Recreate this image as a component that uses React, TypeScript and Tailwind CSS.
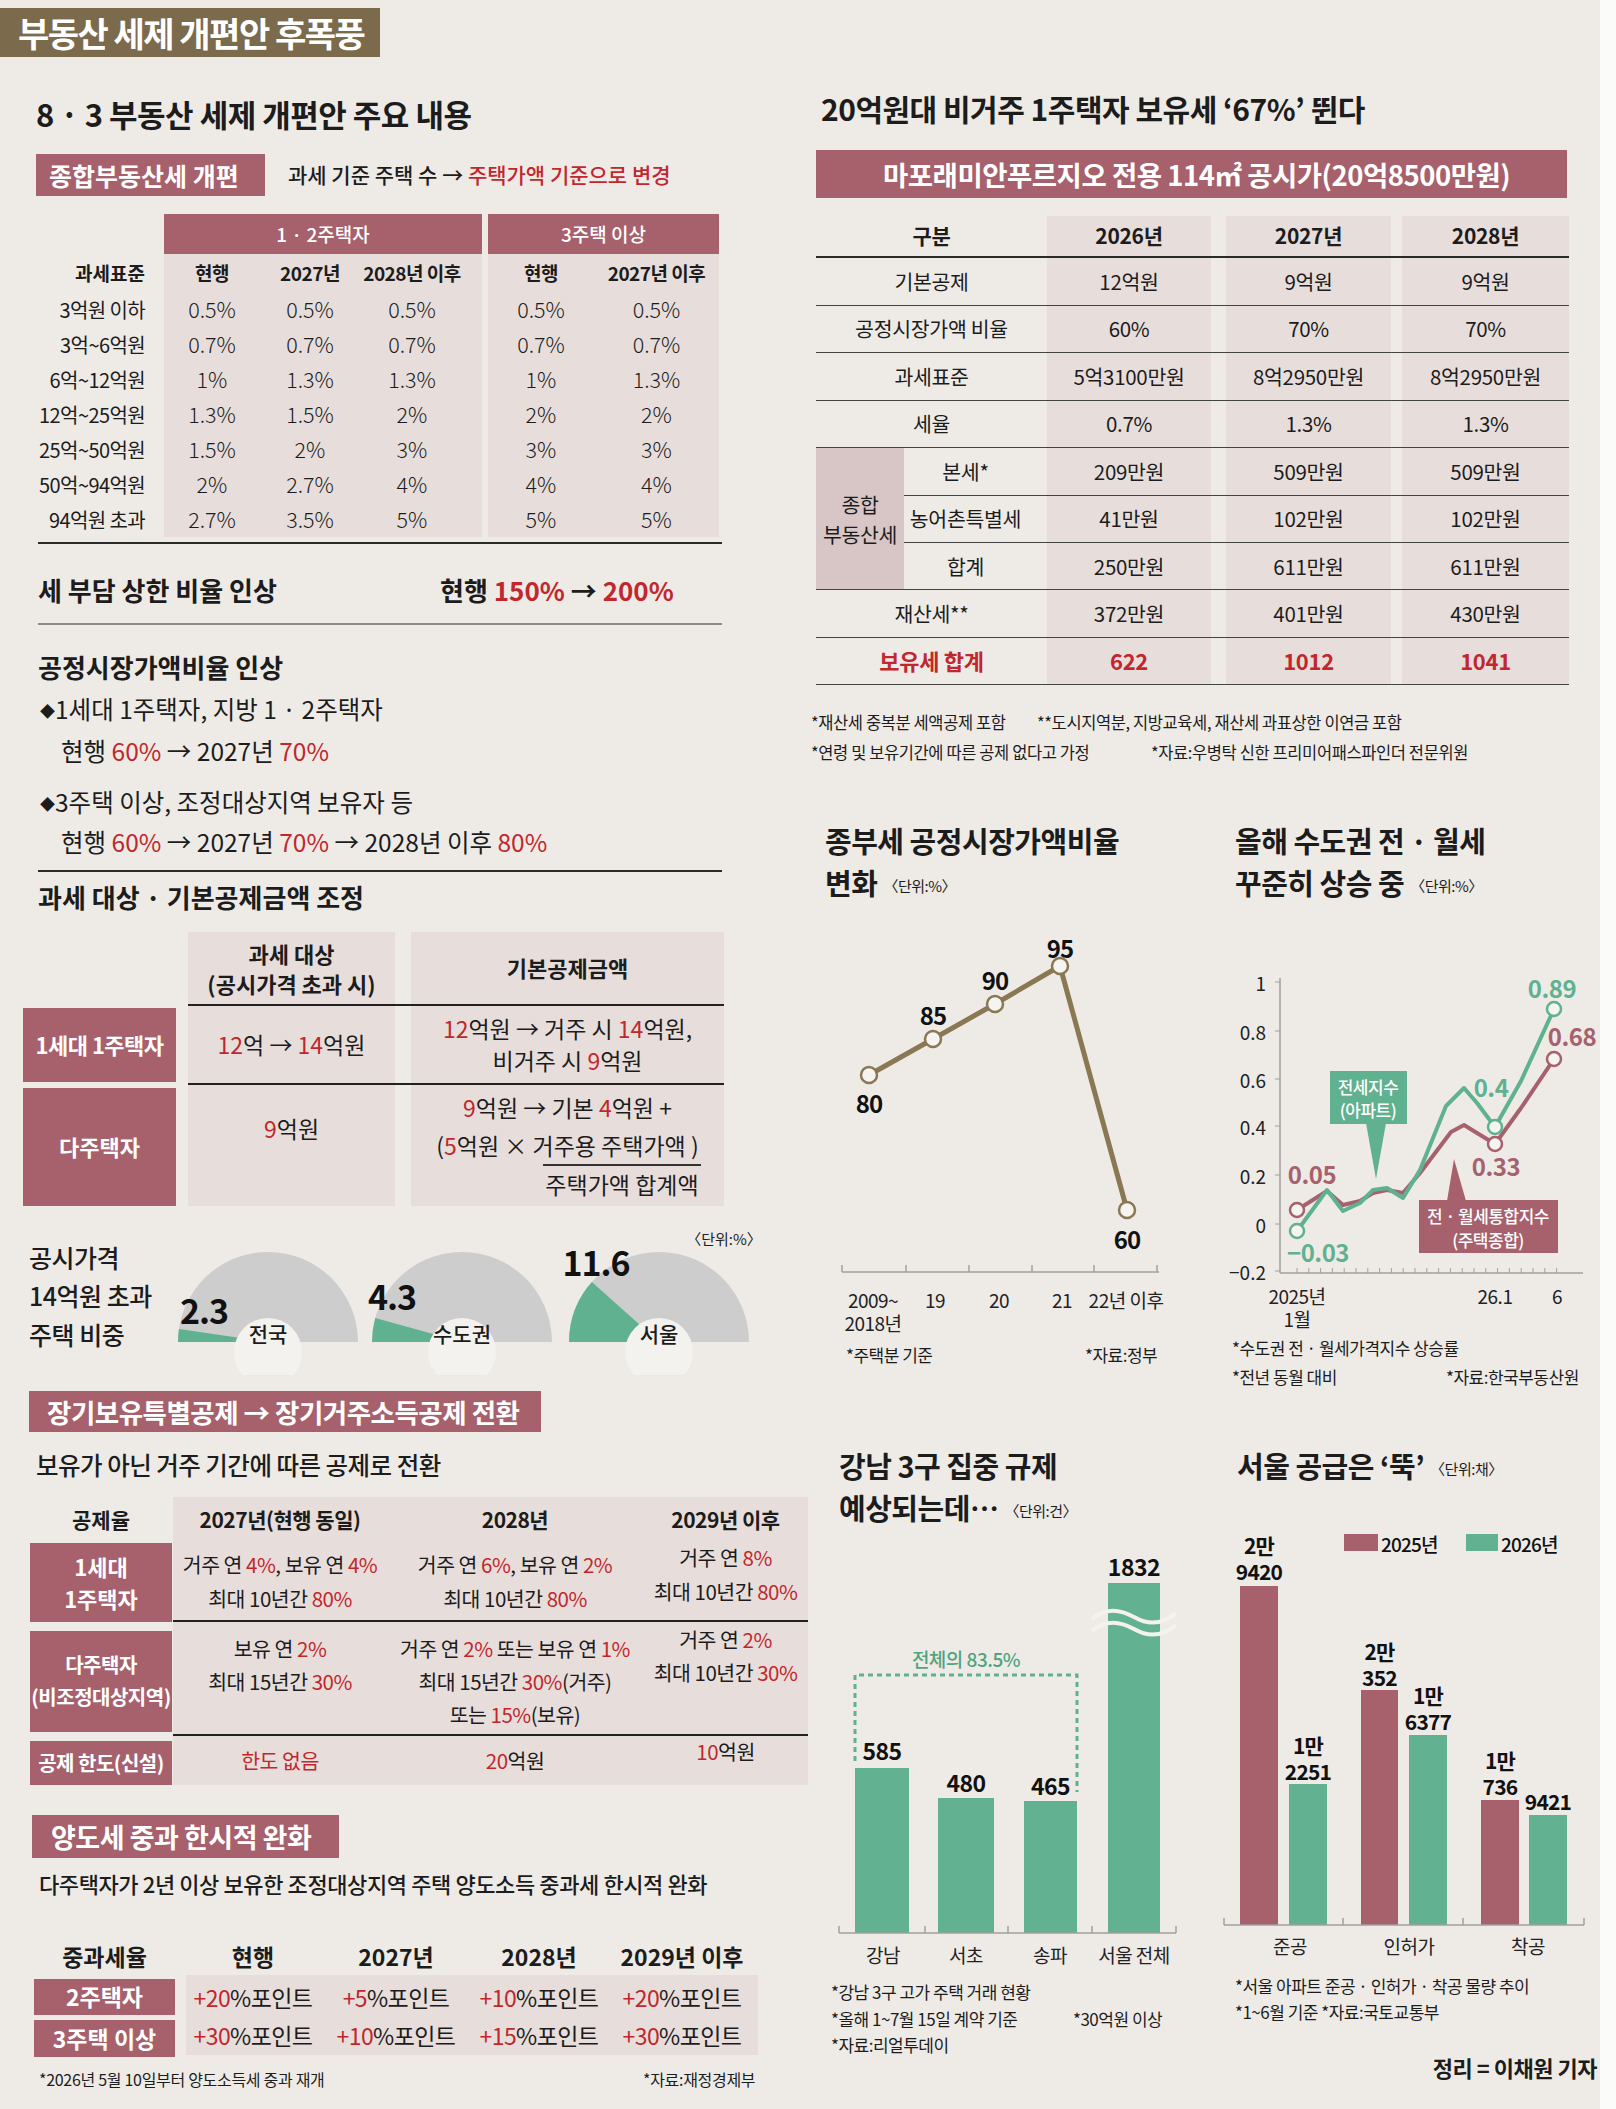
import React from 'react';

const R = ({ children }: { children: React.ReactNode }) => <span className="text-[#c1272d]">{children}</span>;

const taxRows = [
  { label: '3억원 이하', a: ['0.5%', '0.5%', '0.5%'], b: ['0.5%', '0.5%'] },
  { label: '3억~6억원', a: ['0.7%', '0.7%', '0.7%'], b: ['0.7%', '0.7%'] },
  { label: '6억~12억원', a: ['1%', '1.3%', '1.3%'], b: ['1%', '1.3%'] },
  { label: '12억~25억원', a: ['1.3%', '1.5%', '2%'], b: ['2%', '2%'] },
  { label: '25억~50억원', a: ['1.5%', '2%', '3%'], b: ['3%', '3%'] },
  { label: '50억~94억원', a: ['2%', '2.7%', '4%'], b: ['4%', '4%'] },
  { label: '94억원 초과', a: ['2.7%', '3.5%', '5%'], b: ['5%', '5%'] },
];

const G1 = ['w-[96px]', 'w-[100px]', 'w-[104px]'];
const G2 = ['w-[106px]', 'w-[125px]'];

const TaxRateTable = () => (
  <div className="mt-[18px] flex">
    <div className="flex w-[164px] flex-col pr-[19px] text-right">
      <div className="h-[40px]" />
      <div className="h-[38px] text-[19px] font-bold leading-[38px]">과세표준</div>
      {taxRows.map((r) => (
        <div key={r.label} className="h-[35px] text-[20px] leading-[35px] tracking-[-0.6px]">{r.label}</div>
      ))}
    </div>
    <div className="flex w-[318px] flex-col">
      <div className="flex h-[40px] items-center justify-center bg-[#a6616c] text-[19px] font-medium text-white">1 · 2주택자</div>
      <div className="flex flex-col bg-[#e7dedb]">
        <div className="flex h-[38px] items-center text-[19px] font-bold tracking-[-0.5px]">
          {['현행', '2027년', '2028년 이후'].map((h, i) => (
            <div key={h} className={`${G1[i]} text-center`}>{h}</div>
          ))}
        </div>
        {taxRows.map((r) => (
          <div key={r.label} className="flex h-[35px] items-center text-[21.5px] font-light">
            {r.a.map((v, i) => (
              <div key={i} className={`${G1[i]} text-center`}>{v}</div>
            ))}
          </div>
        ))}
      </div>
    </div>
    <div className="ml-[6px] flex w-[231px] flex-col">
      <div className="flex h-[40px] items-center justify-center bg-[#a6616c] text-[19px] font-medium text-white">3주택 이상</div>
      <div className="flex flex-col bg-[#e7dedb]">
        <div className="flex h-[38px] items-center text-[19px] font-bold tracking-[-0.5px]">
          {['현행', '2027년 이후'].map((h, i) => (
            <div key={h} className={`${G2[i]} text-center`}>{h}</div>
          ))}
        </div>
        {taxRows.map((r) => (
          <div key={r.label} className="flex h-[35px] items-center text-[21.5px] font-light">
            {r.b.map((v, i) => (
              <div key={i} className={`${G2[i]} text-center`}>{v}</div>
            ))}
          </div>
        ))}
      </div>
    </div>
  </div>
);

const DeductionTable = () => (
  <div className="mt-[15px] flex">
    <div className="ml-[23px] flex w-[153px] flex-col text-[22px] font-bold text-white">
      <div className="h-[76px]" />
      <div className="flex h-[74px] items-center justify-center bg-[#a6616c] tracking-[-0.5px]">1세대 1주택자</div>
      <div className="mt-[6px] flex h-[118px] items-center justify-center bg-[#a6616c]">다주택자</div>
    </div>
    <div className="ml-[12px] flex w-[536px] flex-col">
      <div className="flex h-[72px] gap-[16px] text-[22px] font-bold">
        <div className="flex w-[207px] flex-col items-center justify-center bg-[#e7dedb] leading-[30px]">
          <span>과세 대상</span>
          <span>(공시가격 초과 시)</span>
        </div>
        <div className="flex w-[313px] items-center justify-center bg-[#e7dedb]">기본공제금액</div>
      </div>
      <div className="h-[2px] bg-[#222]" />
      <div className="flex h-[77px] gap-[16px] text-[23px]">
        <div className="flex w-[207px] items-center justify-center bg-[#e7dedb]">
          <span><R>12</R>억 → <R>14</R>억원</span>
        </div>
        <div className="flex w-[313px] flex-col items-center justify-center bg-[#e7dedb] leading-[32px]">
          <span><R>12</R>억원 → 거주 시 <R>14</R>억원,</span>
          <span>비거주 시 <R>9</R>억원</span>
        </div>
      </div>
      <div className="h-[2px] bg-[#222]" />
      <div className="flex h-[121px] gap-[16px] text-[23px]">
        <div className="flex w-[207px] justify-center bg-[#e7dedb] pt-[27px] leading-[32px]">
          <span><R>9</R>억원</span>
        </div>
        <div className="flex w-[313px] flex-col bg-[#e7dedb] pt-[3px]">
          <div className="h-[38px] text-center leading-[38px]"><R>9</R>억원 → 기본 <R>4</R>억원 +</div>
          <div className="h-[38px] text-center leading-[38px]">(<R>5</R>억원 × 거주용 주택가액 )</div>
          <div className="ml-[132px] h-[2px] w-[158px] bg-[#333]" />
          <div className="ml-[132px] h-[36px] w-[158px] text-center leading-[36px]">주택가액 합계액</div>
        </div>
      </div>
    </div>
  </div>
);

const Donut = ({ cx, pct, label }: { cx: number; pct: number; label: string }) => {
  const cy = 1342;
  const r = 90;
  const a = (pct * 3.6 * Math.PI) / 180;
  const px = cx - r * Math.cos(a);
  const py = cy - r * Math.sin(a);
  return (
    <g>
      <path d={`M${cx - r},${cy} A${r},${r} 0 0 1 ${cx + r},${cy} Z`} fill="#cdcdcd" />
      <path d={`M${cx},${cy} L${cx - r},${cy} A${r},${r} 0 0 1 ${px},${py} Z`} fill="#5fb18f" />
      <circle cx={cx} cy={cy + 10} r={34} fill="#f4f2ef" />
      <text x={cx} y={1333} textAnchor="middle" dominantBaseline="central" fontSize={21} fontWeight={500} fill="#1c1c1c">
        {label}
      </text>
    </g>
  );
};

const ShareDonuts = () => (
  <div className="mt-[19px] flex h-[150px]">
    <div className="w-[170px] pl-[29px] pt-[13px] text-[25px] font-medium leading-[38.5px] tracking-[-0.5px]">
      <div>공시가격</div>
      <div>14억원 초과</div>
      <div>주택 비중</div>
    </div>
    <svg width={600} height={150} viewBox="170 1225 600 150">
      <Donut cx={268} pct={2.3} label="전국" />
      <Donut cx={462} pct={4.3} label="수도권" />
      <Donut cx={659} pct={11.6} label="서울" />
      <g fontSize={34} fontWeight={700} fill="#111" textAnchor="middle" dominantBaseline="central" letterSpacing={-1}>
        <text x={204} y={1309}>2.3</text>
        <text x={392} y={1295}>4.3</text>
        <text x={596} y={1261}>11.6</text>
      </g>
      <text x={724} y={1238} textAnchor="middle" dominantBaseline="central" fontSize={15} fill="#222">〈단위:%〉</text>
    </svg>
  </div>
);

const C3 = ['w-[214px]', 'w-[256px]', 'w-[165px]'];

const LongTermTable = () => (
  <div className="mt-[14px] flex">
    <div className="ml-[30px] flex w-[142px] flex-col font-bold">
      <div className="flex h-[46px] items-center justify-center text-[21px]">공제율</div>
      <div className="flex h-[79px] flex-col items-center justify-center bg-[#a6616c] text-[22px] leading-[32px] text-white">
        <span>1세대</span>
        <span>1주택자</span>
      </div>
      <div className="mt-[9px] flex h-[101px] flex-col items-center justify-center bg-[#a6616c] text-[20px] leading-[32px] tracking-[-0.5px] text-white">
        <span>다주택자</span>
        <span>(비조정대상지역)</span>
      </div>
      <div className="mt-[9px] flex h-[44px] items-center justify-center bg-[#a6616c] text-[20px] tracking-[-0.5px] text-white">공제 한도(신설)</div>
    </div>
    <div className="ml-[1px] flex w-[635px] flex-col bg-[#e7dedb] text-[20.5px] tracking-[-0.5px]">
      <div className="flex h-[46px] items-center text-[21px] font-bold">
        <div className={`${C3[0]} text-center`}>2027년(현행 동일)</div>
        <div className={`${C3[1]} text-center`}>2028년</div>
        <div className={`${C3[2]} text-center`}>2029년 이후</div>
      </div>
      <div className="flex h-[77px] leading-[34px]">
        <div className={`${C3[0]} flex flex-col items-center justify-center`}>
          <span>거주 연 <R>4%</R>, 보유 연 <R>4%</R></span>
          <span>최대 10년간 <R>80%</R></span>
        </div>
        <div className={`${C3[1]} flex flex-col items-center justify-center`}>
          <span>거주 연 <R>6%</R>, 보유 연 <R>2%</R></span>
          <span>최대 10년간 <R>80%</R></span>
        </div>
        <div className={`${C3[2]} flex flex-col items-center justify-center pb-[14px]`}>
          <span>거주 연 <R>8%</R></span>
          <span>최대 10년간 <R>80%</R></span>
        </div>
      </div>
      <div className="h-[2px] bg-[#222]" />
      <div className="flex h-[112px] leading-[33px]">
        <div className={`${C3[0]} flex flex-col items-center pt-[10px]`}>
          <span>보유 연 <R>2%</R></span>
          <span>최대 15년간 <R>30%</R></span>
        </div>
        <div className={`${C3[1]} flex flex-col items-center pt-[10px]`}>
          <span>거주 연 <R>2%</R> 또는 보유 연 <R>1%</R></span>
          <span>최대 15년간 <R>30%</R>(거주)</span>
          <span>또는 <R>15%</R>(보유)</span>
        </div>
        <div className={`${C3[2]} flex flex-col items-center pt-[1px]`}>
          <span>거주 연 <R>2%</R></span>
          <span>최대 10년간 <R>30%</R></span>
        </div>
      </div>
      <div className="h-[2px] bg-[#222]" />
      <div className="flex h-[49px] items-center">
        <div className={`${C3[0]} text-center`}><R>한도 없음</R></div>
        <div className={`${C3[1]} text-center`}><R>20</R>억원</div>
        <div className={`${C3[2]} pb-[18px] text-center`}><R>10</R>억원</div>
      </div>
    </div>
  </div>
);

const C4 = ['w-[134px]', 'w-[152px]', 'w-[134px]', 'w-[152px]'];

const SurchargeTable = () => (
  <>
    <div className="mt-[39px] flex h-[36px] items-center text-[23px] font-bold">
      <div className="ml-[34px] w-[141px] text-center">중과세율</div>
      <div className="ml-[11px] flex">
        {['현행', '2027년', '2028년', '2029년 이후'].map((h, i) => (
          <div key={h} className={`${C4[i]} text-center`}>{h}</div>
        ))}
      </div>
    </div>
    <div className="flex">
      <div className="ml-[34px] flex w-[141px] flex-col text-[23px] font-bold text-white">
        <div className="mt-[4px] flex h-[36px] items-center justify-center bg-[#a6616c]">2주택자</div>
        <div className="mt-[5px] flex h-[37px] items-center justify-center bg-[#a6616c]">3주택 이상</div>
      </div>
      <div className="ml-[11px] flex h-[80px] w-[572px] flex-col bg-[#e7dedb] pt-[3px] text-[23px] tracking-[-0.6px]">
        {[
          ['+20', '+5', '+10', '+20'],
          ['+30', '+10', '+15', '+30'],
        ].map((row, ri) => (
          <div key={ri} className="flex h-[38.5px] items-center">
            {row.map((v, i) => (
              <div key={i} className={`${C4[i]} whitespace-nowrap text-center`}>
                <R>{v}</R>%포인트
              </div>
            ))}
          </div>
        ))}
      </div>
    </div>
    <div className="mt-[8px] flex h-[28px] items-center text-[16px] tracking-[-0.3px]">
      <span className="w-[643px] pl-[39px]">*2026년 5월 10일부터 양도소득세 중과 재개</span>
      <span>*자료:재정경제부</span>
    </div>
  </>
);

const LeftColumn = () => (
  <div className="flex w-[811px] shrink-0 flex-col">
    <div className="mt-[8px] h-[49px] w-[380px] whitespace-nowrap bg-[#7b6a4b] pl-[18px] text-[34px] font-bold leading-[49px] tracking-[-1.5px] text-white">부동산 세제 개편안 후폭풍</div>
    <h1 className="mt-[37px] h-[40px] pl-[36px] text-[31px] font-bold leading-[40px] tracking-[-0.5px]">8 · 3 부동산 세제 개편안 주요 내용</h1>
    <div className="mt-[20px] flex h-[42px] items-center">
      <div className="ml-[36px] h-[42px] w-[229px] bg-[#a6616c] pl-[13px] text-[25px] font-bold leading-[42px] text-white">종합부동산세 개편</div>
      <div className="ml-[23px] text-[21px] font-medium">
        과세 기준 주택 수 → <R>주택가액 기준으로 변경</R>
      </div>
    </div>
    <TaxRateTable />
    <div className="ml-[38px] mt-[5px] h-[2px] w-[684px] bg-[#2a2a2a]" />
    <div className="mt-[25px] flex h-[40px] items-center pl-[38px] text-[26px] font-bold">
      <span className="w-[402px]">세 부담 상한 비율 인상</span>
      <span>
        현행 <R>150%</R> → <R>200%</R>
      </span>
    </div>
    <div className="ml-[38px] mt-[14px] h-[1.5px] w-[684px] bg-[#8a8a8a]" />
    <div className="mt-[22px] h-[40px] pl-[38px] text-[26px] font-bold leading-[40px]">공정시장가액비율 인상</div>
    <div className="mt-[1px] h-[42px] pl-[40px] text-[24.5px] leading-[42px]">
      <span className="align-[2px] text-[15px]">◆</span>1세대 1주택자, 지방 1 · 2주택자
    </div>
    <div className="h-[42px] pl-[61px] text-[24.5px] leading-[42px]">
      현행 <R>60%</R> → 2027년 <R>70%</R>
    </div>
    <div className="mt-[9px] h-[42px] pl-[40px] text-[24.5px] leading-[42px]">
      <span className="align-[2px] text-[15px]">◆</span>3주택 이상, 조정대상지역 보유자 등
    </div>
    <div className="h-[38px] pl-[61px] text-[24.5px] leading-[38px]">
      현행 <R>60%</R> → 2027년 <R>70%</R> → 2028년 이후 <R>80%</R>
    </div>
    <div className="ml-[38px] mt-[9px] h-[2px] w-[684px] bg-[#2a2a2a]" />
    <div className="mt-[5px] h-[40px] pl-[38px] text-[26px] font-bold leading-[40px]">과세 대상 · 기본공제금액 조정</div>
    <DeductionTable />
    <ShareDonuts />
    <div className="ml-[29px] mt-[16px] h-[41px] w-[512px] whitespace-nowrap bg-[#a6616c] pl-[18px] text-[26.5px] font-bold leading-[41px] tracking-[-0.5px] text-white">
      장기보유특별공제 → 장기거주소득공제 전환
    </div>
    <div className="mt-[15px] h-[36px] pl-[36px] text-[24.5px] font-medium leading-[36px] tracking-[-0.5px]">보유가 아닌 거주 기간에 따른 공제로 전환</div>
    <LongTermTable />
    <div className="ml-[32px] mt-[30px] h-[43px] w-[307px] whitespace-nowrap bg-[#a6616c] pl-[19px] text-[27px] font-bold leading-[43px] tracking-[-0.5px] text-white">
      양도세 중과 한시적 완화
    </div>
    <div className="mt-[8px] h-[34px] whitespace-nowrap pl-[39px] text-[22px] font-medium leading-[34px] tracking-[-0.4px]">
      다주택자가 2년 이상 보유한 조정대상지역 주택 양도소득 중과세 한시적 완화
    </div>
    <SurchargeTable />
  </div>
);

const VAL_W = ['w-[164px]', 'w-[165px]', 'w-[167px]'];

const Vals = ({ vals }: { vals: string[] }) => (
  <>
    <div className={`${VAL_W[0]} flex items-center justify-center bg-[#e7dedb]`}>{vals[0]}</div>
    <div className="w-[15px]" />
    <div className={`${VAL_W[1]} flex items-center justify-center bg-[#e7dedb]`}>{vals[1]}</div>
    <div className="w-[11px]" />
    <div className={`${VAL_W[2]} flex items-center justify-center bg-[#e7dedb]`}>{vals[2]}</div>
  </>
);

const HoldingTaxTable = () => (
  <div className="ml-[5px] mt-[18px] flex w-[753px] flex-col text-[20.5px] tracking-[-0.3px]">
    <div className="flex h-[42px] border-b-2 border-[#2a2a2a] text-[21px] font-bold">
      <div className="flex w-[231px] items-center justify-center">구분</div>
      <Vals vals={['2026년', '2027년', '2028년']} />
    </div>
    {[
      ['기본공제', '12억원', '9억원', '9억원'],
      ['공정시장가액 비율', '60%', '70%', '70%'],
      ['과세표준', '5억3100만원', '8억2950만원', '8억2950만원'],
      ['세율', '0.7%', '1.3%', '1.3%'],
    ].map((r) => (
      <div key={r[0]} className="flex h-[47.5px] border-b-[1.5px] border-[#444]">
        <div className="flex w-[231px] items-center justify-center">{r[0]}</div>
        <Vals vals={r.slice(1)} />
      </div>
    ))}
    <div className="flex border-b-[1.5px] border-[#444]">
      <div className="flex w-[88px] flex-col items-center justify-center bg-[#d8c6c6] leading-[30px]">
        <span>종합</span>
        <span>부동산세</span>
      </div>
      <div className="flex w-[665px] flex-col">
        {[
          ['본세*', '209만원', '509만원', '509만원'],
          ['농어촌특별세', '41만원', '102만원', '102만원'],
          ['합계', '250만원', '611만원', '611만원'],
        ].map((r, i) => (
          <div key={r[0]} className={`flex ${i < 2 ? 'h-[47.5px] border-b-[1.5px] border-[#444]' : 'h-[46px]'}`}>
            <div className="flex w-[143px] items-center justify-center pr-[20px]">{r[0]}</div>
            <Vals vals={r.slice(1)} />
          </div>
        ))}
      </div>
    </div>
    <div className="flex h-[47.5px] border-b-[1.5px] border-[#444]">
      <div className="flex w-[231px] items-center justify-center">재산세**</div>
      <Vals vals={['372만원', '401만원', '430만원']} />
    </div>
    <div className="flex h-[47.5px] border-b-[1.5px] border-[#444] text-[22px] font-bold text-[#c1272d]">
      <div className="flex w-[231px] items-center justify-center">보유세 합계</div>
      <Vals vals={['622', '1012', '1041']} />
    </div>
  </div>
);

const RatioChart = () => {
  const pts: [number, number, string, number][] = [
    [869, 1072, '80', 1099],
    [933, 1036, '85', 1011],
    [995, 1001, '90', 976],
    [1060, 963, '95', 944],
    [1127, 1207, '60', 1235],
  ];
  return (
    <svg width={410} height={433} viewBox="811 904 410 433">
      <line x1={842} y1={1269} x2={1159} y2={1269} stroke="#a0a0a0" strokeWidth={1.5} />
      {[842, 906, 969, 1032, 1094, 1157].map((x) => (
        <line key={x} x1={x} y1={1262} x2={x} y2={1269} stroke="#a0a0a0" strokeWidth={1.5} />
      ))}
      <polyline points={pts.map((p) => `${p[0]},${p[1]}`).join(' ')} fill="none" stroke="#8a7753" strokeWidth={5} strokeLinejoin="round" />
      {pts.map((p) => (
        <circle key={p[2]} cx={p[0]} cy={p[1]} r={8} fill="#f6f4f0" stroke="#8a7753" strokeWidth={2.5} />
      ))}
      <g fontSize={24} fontWeight={700} textAnchor="middle" dominantBaseline="central" fill="#111" letterSpacing={-1}>
        {pts.map((p) => (
          <text key={p[2]} x={p[0]} y={p[3]}>{p[2]}</text>
        ))}
      </g>
      <g fontSize={19} textAnchor="middle" dominantBaseline="central" fill="#222" letterSpacing={-0.5}>
        <text x={873} y={1296}>2009~</text>
        <text x={873} y={1319}>2018년</text>
        <text x={935} y={1296}>19</text>
        <text x={999} y={1296}>20</text>
        <text x={1062} y={1296}>21</text>
        <text x={1126} y={1296}>22년 이후</text>
      </g>
    </svg>
  );
};

const greenPts = '1297,1228 1327,1187 1343,1208 1360,1200 1373,1187 1387,1185 1403,1195 1420,1167 1446,1103 1464,1085 1477,1100 1495,1124 1521,1078 1554,1006';
const redPts = '1297,1207 1327,1188 1343,1202 1360,1198 1373,1190 1387,1187 1403,1190 1420,1170 1451,1129 1464,1122 1477,1130 1495,1141 1521,1105 1554,1056';

const RentChart = () => {
  const ticks = Array.from({ length: 23 }, (_, i) => 1297 + i * 11.8);
  return (
    <svg width={379} height={426} viewBox="1221 904 379 426">
      <line x1={1280} y1={975} x2={1280} y2={1270} stroke="#a0a0a0" strokeWidth={1.5} />
      <line x1={1280} y1={1270} x2={1583} y2={1270} stroke="#a0a0a0" strokeWidth={1.5} />
      {ticks.map((x) => (
        <line key={x} x1={x} y1={1265} x2={x} y2={1270} stroke="#a0a0a0" strokeWidth={1} />
      ))}
      {[
        ['1', 979],
        ['0.8', 1028],
        ['0.6', 1076],
        ['0.4', 1123],
        ['0.2', 1172],
        ['0', 1221],
        ['−0.2', 1268],
      ].map(([t, y]) => (
        <g key={t as string}>
          <line x1={1275} y1={y as number} x2={1280} y2={y as number} stroke="#a0a0a0" strokeWidth={1} />
          <text x={1266} y={y as number} textAnchor="end" dominantBaseline="central" fontSize={19} fill="#222">{t}</text>
        </g>
      ))}
      <polyline points={redPts} fill="none" stroke="#a6616c" strokeWidth={4} strokeLinejoin="round" />
      <polyline points={greenPts} fill="none" stroke="#5fb18f" strokeWidth={4} strokeLinejoin="round" />
      {[
        [1297, 1207, '#a6616c'],
        [1495, 1141, '#a6616c'],
        [1554, 1056, '#a6616c'],
        [1297, 1228, '#5fb18f'],
        [1495, 1124, '#5fb18f'],
        [1554, 1006, '#5fb18f'],
      ].map(([x, y, c]) => (
        <circle key={`${x}-${y}`} cx={x as number} cy={y as number} r={7} fill="#f6f4f0" stroke={c as string} strokeWidth={2.5} />
      ))}
      <g fontSize={24} fontWeight={700} textAnchor="middle" dominantBaseline="central" letterSpacing={-0.5}>
        <text x={1552} y={984} fill="#5fb18f">0.89</text>
        <text x={1572} y={1032} fill="#a6616c">0.68</text>
        <text x={1491} y={1083} fill="#5fb18f">0.4</text>
        <text x={1496} y={1162} fill="#a6616c">0.33</text>
        <text x={1312} y={1170} fill="#a6616c">0.05</text>
        <text x={1318} y={1248} fill="#5fb18f">−0.03</text>
      </g>
      <path d="M1366,1120 L1386,1120 L1376,1176 Z" fill="#5fb18f" />
      <rect x={1330} y={1068} width={77} height={53} fill="#5fb18f" />
      <g fontSize={17} fontWeight={500} textAnchor="middle" dominantBaseline="central" fill="#fff" letterSpacing={-0.5}>
        <text x={1368} y={1083}>전세지수</text>
        <text x={1368} y={1106}>(아파트)</text>
      </g>
      <path d="M1447,1198 L1466,1198 L1454,1156 Z" fill="#a6616c" />
      <rect x={1419} y={1197} width={139} height={53} fill="#a6616c" />
      <g fontSize={17} fontWeight={500} textAnchor="middle" dominantBaseline="central" fill="#fff" letterSpacing={-0.5}>
        <text x={1488} y={1212}>전 · 월세통합지수</text>
        <text x={1488} y={1236}>(주택종합)</text>
      </g>
      <g fontSize={19} textAnchor="middle" dominantBaseline="central" fill="#222" letterSpacing={-0.5}>
        <text x={1297} y={1292}>2025년</text>
        <text x={1297} y={1315}>1월</text>
        <text x={1495} y={1292}>26.1</text>
        <text x={1557} y={1292}>6</text>
      </g>
    </svg>
  );
};

const GangnamChart = () => {
  const bars = [
    [855, 909, 1765, '585', 1747, 883, '강남'],
    [938, 994, 1795, '480', 1779, 966, '서초'],
    [1024, 1077, 1798, '465', 1782, 1050, '송파'],
    [1108, 1160, 1580, '1832', 1563, 1134, '서울 전체'],
  ] as const;
  return (
    <svg width={410} height={447} viewBox="811 1529 410 447">
      {bars.map((b) => (
        <rect key={b[6]} x={b[0]} y={b[2]} width={b[1] - b[0]} height={1930 - b[2]} fill="#62b291" />
      ))}
      <path d="M1092,1616 C1106,1604 1120,1606 1134,1614 C1148,1622 1162,1622 1176,1610" fill="none" stroke="#f4f2ef" strokeWidth={4} />
      <path d="M1092,1628 C1106,1616 1120,1618 1134,1626 C1148,1634 1162,1634 1176,1622" fill="none" stroke="#f4f2ef" strokeWidth={4} />
      <path d="M855,1758 L855,1672 L1077,1672 L1077,1789" fill="none" stroke="#5fb18f" strokeWidth={3} strokeDasharray="5 4" />
      <text x={966} y={1655} textAnchor="middle" dominantBaseline="central" fontSize={19} fontWeight={500} fill="#4fa47f" letterSpacing={-0.5}>전체의 83.5%</text>
      <g fontSize={23} fontWeight={700} textAnchor="middle" dominantBaseline="central" fill="#111" letterSpacing={-0.5}>
        {bars.map((b) => (
          <text key={b[3]} x={(b[0] + b[1]) / 2} y={b[4]}>{b[3]}</text>
        ))}
      </g>
      <line x1={839} y1={1930} x2={1176} y2={1930} stroke="#a0a0a0" strokeWidth={1.5} />
      {[839, 925, 1008, 1092, 1176].map((x) => (
        <line key={x} x1={x} y1={1923} x2={x} y2={1930} stroke="#a0a0a0" strokeWidth={1.5} />
      ))}
      <g fontSize={19} textAnchor="middle" dominantBaseline="central" fill="#222" letterSpacing={-0.5}>
        {bars.map((b) => (
          <text key={b[6]} x={b[5]} y={1951}>{b[6]}</text>
        ))}
      </g>
    </svg>
  );
};

const SupplyChart = () => {
  const bars = [
    [1240, 1278, 1587, '#a6616c', ['2만', '9420'], 1546],
    [1289, 1327, 1785, '#62b291', ['1만', '2251'], 1746],
    [1361, 1398, 1691, '#a6616c', ['2만', '352'], 1652],
    [1409, 1447, 1736, '#62b291', ['1만', '6377'], 1696],
    [1481, 1519, 1801, '#a6616c', ['1만', '736'], 1761],
    [1529, 1567, 1816, '#62b291', ['9421'], 1802],
  ] as const;
  return (
    <svg width={379} height={487} viewBox="1221 1487 379 487">
      <rect x={1344} y={1535} width={34} height={17} fill="#a6616c" />
      <rect x={1466} y={1535} width={32} height={17} fill="#62b291" />
      <g fontSize={19} fontWeight={500} dominantBaseline="central" fill="#111" letterSpacing={-0.8}>
        <text x={1381} y={1544}>2025년</text>
        <text x={1501} y={1544}>2026년</text>
      </g>
      {bars.map((b) => (
        <rect key={b[0]} x={b[0]} y={b[2]} width={b[1] - b[0]} height={1926 - b[2]} fill={b[3]} />
      ))}
      <g fontSize={21} fontWeight={700} textAnchor="middle" dominantBaseline="central" fill="#111" letterSpacing={-0.8}>
        {bars.map((b) =>
          b[4].map((t, i) => (
            <text key={`${b[0]}-${i}`} x={(b[0] + b[1]) / 2} y={b[5] + i * 25.5}>{t}</text>
          )),
        )}
      </g>
      <line x1={1224} y1={1926} x2={1584} y2={1926} stroke="#a0a0a0" strokeWidth={1.5} />
      {[1224, 1343, 1463, 1584].map((x) => (
        <line key={x} x1={x} y1={1919} x2={x} y2={1926} stroke="#a0a0a0" strokeWidth={1.5} />
      ))}
      <g fontSize={19} textAnchor="middle" dominantBaseline="central" fill="#222" letterSpacing={-0.5}>
        <text x={1290} y={1946}>준공</text>
        <text x={1409} y={1946}>인허가</text>
        <text x={1528} y={1946}>착공</text>
      </g>
    </svg>
  );
};

const Unit = ({ children }: { children: React.ReactNode }) => <span className="ml-[6px] align-[3px] text-[15px] font-normal tracking-[-0.5px]">{children}</span>;

const RightColumn = () => (
  <div className="flex w-[789px] shrink-0 flex-col">
    <h2 className="mt-[88px] h-[40px] whitespace-nowrap pl-[10px] text-[30px] font-bold leading-[40px] tracking-[-0.5px]">20억원대 비거주 1주택자 보유세 ‘67%’ 뛴다</h2>
    <div className="ml-[5px] mt-[22px] h-[48px] w-[751px] whitespace-nowrap bg-[#a6616c] pl-[67px] text-[27.5px] font-bold leading-[48px] tracking-[-0.5px] text-white">
      마포래미안푸르지오 전용 114㎡ 공시가(20억8500만원)
    </div>
    <HoldingTaxTable />
    <div className="mt-[22px] text-[16.5px] leading-[30px] tracking-[-0.4px]">
      <div className="flex">
        <span className="w-[226px]">*재산세 중복분 세액공제 포함</span>
        <span>**도시지역분, 지방교육세, 재산세 과표상한 이연금 포함</span>
      </div>
      <div className="flex">
        <span className="w-[340px]">*연령 및 보유기간에 따른 공제 없다고 가정</span>
        <span>*자료:우병탁 신한 프리미어패스파인더 전문위원</span>
      </div>
    </div>
    <div className="mt-[52px] flex h-[620px]">
      <div className="flex w-[410px] flex-col">
        <div className="whitespace-nowrap pl-[14px] text-[29px] font-bold leading-[42px] tracking-[-0.5px]">
          <div>종부세 공정시장가액비율</div>
          <div>
            변화<Unit>〈단위:%〉</Unit>
          </div>
        </div>
        <RatioChart />
        <div className="flex h-[30px] items-center text-[17px] tracking-[-0.5px]">
          <span className="w-[274px] pl-[35px]">*주택분 기준</span>
          <span>*자료:정부</span>
        </div>
      </div>
      <div className="flex w-[379px] flex-col">
        <div className="whitespace-nowrap pl-[14px] text-[29px] font-bold leading-[42px] tracking-[-0.5px]">
          <div>올해 수도권 전 · 월세</div>
          <div>
            꾸준히 상승 중<Unit>〈단위:%〉</Unit>
          </div>
        </div>
        <RentChart />
        <div className="pl-[11px] text-[17px] leading-[29px] tracking-[-0.5px]">
          <div>*수도권 전 · 월세가격지수 상승률</div>
          <div className="flex">
            <span className="w-[214px]">*전년 동월 대비</span>
            <span>*자료:한국부동산원</span>
          </div>
        </div>
      </div>
    </div>
    <div className="flex">
      <div className="flex w-[410px] flex-col">
        <div className="mt-[5px] whitespace-nowrap pl-[28px] text-[29px] font-bold leading-[42px] tracking-[-0.5px]">
          <div>강남 3구 집중 규제</div>
          <div>
            예상되는데…<Unit>〈단위:건〉</Unit>
          </div>
        </div>
        <GangnamChart />
        <div className="pl-[20px] text-[17px] leading-[26.5px] tracking-[-0.5px]">
          <div>*강남 3구 고가 주택 거래 현황</div>
          <div className="flex">
            <span className="w-[242px]">*올해 1~7월 15일 계약 기준</span>
            <span>*30억원 이상</span>
          </div>
          <div>*자료:리얼투데이</div>
        </div>
      </div>
      <div className="flex w-[379px] flex-col">
        <div className="mt-[5px] h-[42px] whitespace-nowrap pl-[16px] text-[29px] font-bold leading-[42px] tracking-[-0.5px]">
          서울 공급은 ‘뚝’<Unit>〈단위:채〉</Unit>
        </div>
        <SupplyChart />
        <div className="pl-[14px] text-[17px] leading-[26px] tracking-[-0.5px]">
          <div>*서울 아파트 준공 · 인허가 · 착공 물량 추이</div>
          <div>*1~6월 기준 *자료:국토교통부</div>
        </div>
        <div className="mt-[24px] h-[36px] pr-[3px] text-right text-[22px] font-bold leading-[36px] tracking-[-0.5px]">정리 = 이채원 기자</div>
      </div>
    </div>
  </div>
);

export default function App() {
  return (
    <div className="flex h-[2109px] w-[1616px] overflow-hidden bg-[#eeebe7] font-['Noto_Sans_CJK_KR','Noto_Sans',sans-serif] text-[#1c1c1c]">
      <LeftColumn />
      <RightColumn />
      <div className="w-[16px] shrink-0 bg-[#fbfbfa]" />
    </div>
  );
}
